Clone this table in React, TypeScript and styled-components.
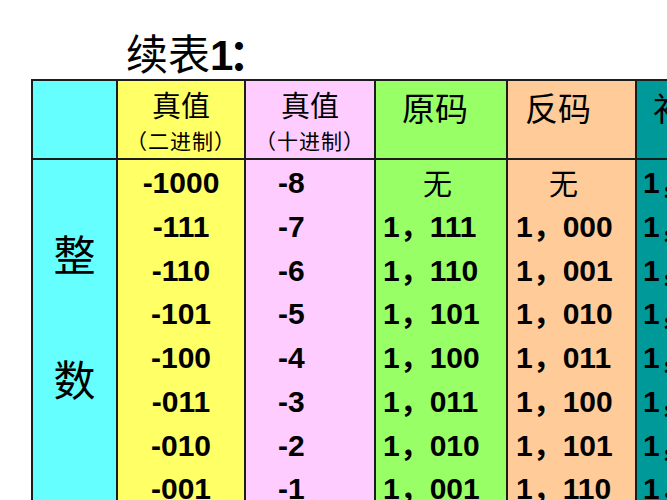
import styled, { createGlobalStyle } from "styled-components";

const GlobalStyle = createGlobalStyle`
  html, body {
    margin: 0;
    padding: 0;
    background: #ffffff;
    overflow: hidden;
  }
`;

const LINE = "#1c1c1c";

const Page = styled.div`
  width: 667px;
  height: 500px;
  overflow: hidden;
  background: #ffffff;
  color: #000;
`;

const Title = styled.h1`
  margin: 28px 0 3px;
  padding-left: 126px;
  height: 48px;
  line-height: 48px;
  font-size: 42px;
  font-weight: 400;
  font-family: "Noto Sans CJK SC", sans-serif;
  white-space: nowrap;
`;

const TitleNum = styled.span`
  font-family: "Liberation Sans", "Noto Sans CJK SC", sans-serif;
  font-weight: 700;
`;

const TitleColon = styled.span`
  margin-left: -5px;
  font-weight: 700;
`;

const Table = styled.div`
  display: flex;
  width: max-content;
  margin-left: 31px;
  border-top: 2px solid ${LINE};
  border-left: 2px solid ${LINE};
`;

const Column = styled.div<{ $bg: string; $w: number }>`
  display: flex;
  flex-direction: column;
  box-sizing: border-box;
  width: ${(p) => p.$w}px;
  background: ${(p) => p.$bg};
  border-right: 2px solid ${LINE};
`;

const Head = styled.div<{ $pad?: number }>`
  height: 77px;
  border-bottom: 2px solid ${LINE};
  display: flex;
  flex-direction: column;
  align-items: ${(p) => (p.$pad === undefined ? "center" : "flex-start")};
  padding-left: ${(p) => p.$pad ?? 0}px;
  font-family: "Noto Sans CJK SC", sans-serif;
  white-space: nowrap;
`;

const HeadMain = styled.div<{ $big?: boolean }>`
  margin-top: ${(p) => (p.$big ? 4 : 5)}px;
  font-size: ${(p) => (p.$big ? 33 : 29)}px;
  line-height: ${(p) => (p.$big ? 44 : 36)}px;
`;

const HeadSub = styled.div`
  font-size: 21px;
  line-height: 36px;
  letter-spacing: 1px;
`;

const Body = styled.div<{ $pad?: number }>`
  display: flex;
  flex-direction: column;
  align-items: ${(p) => (p.$pad === undefined ? "center" : "flex-start")};
  padding: 1px 0 0 ${(p) => p.$pad ?? 0}px;
  min-height: 380px;
`;

const Value = styled.div<{ $indent?: number }>`
  height: 43.75px;
  line-height: 43.75px;
  padding-left: ${(p) => p.$indent ?? 0}px;
  font-family: "Liberation Sans", "Noto Sans CJK SC", sans-serif;
  font-size: 30px;
  font-weight: 700;
  white-space: nowrap;
`;

const Plain = styled.span`
  font-family: "Noto Sans CJK SC", sans-serif;
  font-size: 29px;
  font-weight: 400;
`;

const SideLabel = styled.div`
  display: flex;
  flex-direction: column;
  align-items: center;
  gap: 81px;
  padding-top: 71px;
  font-family: "Noto Sans CJK SC", sans-serif;
  font-size: 42px;
  line-height: 44px;
`;

const bin = ["-1000", "-111", "-110", "-101", "-100", "-011", "-010", "-001"];
const dec = ["-8", "-7", "-6", "-5", "-4", "-3", "-2", "-1"];
const orig = ["无", "1，111", "1，110", "1，101", "1，100", "1，011", "1，010", "1，001"];
const inv = ["无", "1，000", "1，001", "1，010", "1，011", "1，100", "1，101", "1，110"];
const comp = ["1，000", "1，001", "1，010", "1，011", "1，100", "1，101", "1，110", "1，111"];

const renderCodes = (list: string[], noneIndent: number) =>
  list.map((v, i) =>
    v === "无" ? (
      <Value key={i} $indent={noneIndent}>
        <Plain>{v}</Plain>
      </Value>
    ) : (
      <Value key={i}>{v}</Value>
    )
  );

export default function App() {
  return (
    <Page>
      <GlobalStyle />
      <Title>
        续表<TitleNum>1</TitleNum>
        <TitleColon>：</TitleColon>
      </Title>
      <Table>
        <Column $bg="#66ffff" $w={85}>
          <Head />
          <SideLabel>
            <span>整</span>
            <span>数</span>
          </SideLabel>
        </Column>

        <Column $bg="#ffff66" $w={128}>
          <Head>
            <HeadMain>真值</HeadMain>
            <HeadSub>（二进制）</HeadSub>
          </Head>
          <Body>
            {bin.map((v) => (
              <Value key={v}>{v}</Value>
            ))}
          </Body>
        </Column>

        <Column $bg="#ffccff" $w={130}>
          <Head>
            <HeadMain>真值</HeadMain>
            <HeadSub>（十进制）</HeadSub>
          </Head>
          <Body $pad={32}>
            {dec.map((v) => (
              <Value key={v}>{v}</Value>
            ))}
          </Body>
        </Column>

        <Column $bg="#99ff66" $w={132}>
          <Head $pad={26}>
            <HeadMain $big>原码</HeadMain>
          </Head>
          <Body $pad={7}>{renderCodes(orig, 40)}</Body>
        </Column>

        <Column $bg="#ffcc99" $w={129}>
          <Head $pad={17}>
            <HeadMain $big>反码</HeadMain>
          </Head>
          <Body $pad={8}>{renderCodes(inv, 33)}</Body>
        </Column>

        <Column $bg="#009999" $w={132}>
          <Head $pad={16}>
            <HeadMain $big>补码</HeadMain>
          </Head>
          <Body $pad={6}>{renderCodes(comp, 0)}</Body>
        </Column>
      </Table>
    </Page>
  );
}
